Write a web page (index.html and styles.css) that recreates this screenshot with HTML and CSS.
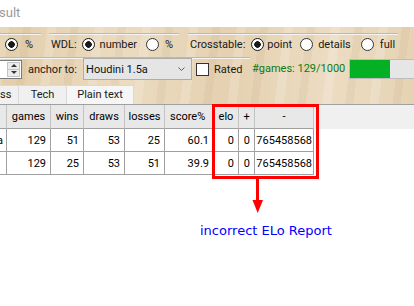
FILE: index.html
```html
<!DOCTYPE html>
<html lang="en">
<head>
    <meta charset="UTF-8">
    <meta name="viewport" content="width=device-width, initial-scale=1.0">
    <title>Tournament Result</title>
    <link rel="stylesheet" href="styles.css">
</head>
<body>

<div class="titlebar"><span class="title">sult</span></div>

<div class="toolbar">
    <div class="row1">
        <div class="grp g1">
            <span class="radio on"></span><span class="lbl ml7">%</span>
        </div>
        <div class="grp g2">
            <span class="lbl">WDL:</span>
            <span class="radio on ml5"></span><span class="lbl ml5">number</span>
            <span class="radio ml9"></span><span class="lbl ml6">%</span>
        </div>
        <div class="grp g3">
            <span class="lbl">Crosstable:</span>
            <span class="radio on ml6"></span><span class="lbl ml3">point</span>
            <span class="radio ml8"></span><span class="lbl ml5">details</span>
            <span class="radio ml10"></span><span class="lbl ml6">full</span>
        </div>
    </div>

    <div class="row2">
        <div class="grp g4">
            <div class="spin">
                <div class="spinbtn">
                    <span class="up"></span>
                    <span class="down"></span>
                </div>
            </div>
            <span class="lbl ml6">anchor to:</span>
            <div class="combo">
                <span>Houdini 1.5a</span>
                <svg width="7" height="4" viewBox="0 0 7 4"><polyline points="0.5,0.5 3.5,3.5 6.5,0.5" fill="none" stroke="#606060" stroke-width="1"/></svg>
            </div>
            <span class="check"></span><span class="lbl ml5">Rated</span>
        </div>
        <span class="games">#games: 129/1000</span>
        <div class="progress"><div class="fill" style="width: 40px"></div></div>
    </div>

    <div class="tabs">
        <div class="tab t1">ss</div>
        <div class="tab t2">Tech</div>
        <div class="tab t3">Plain text</div>
    </div>
</div>

<div class="panel">
    <table class="result">
        <colgroup>
            <col style="width: 7px">
            <col style="width: 44px">
            <col style="width: 33px">
            <col style="width: 41px">
            <col style="width: 40px">
            <col style="width: 49px">
            <col style="width: 25px">
            <col style="width: 16px">
            <col style="width: 59px">
            <col>
        </colgroup>
        <tr>
            <th></th>
            <th>games</th>
            <th>wins</th>
            <th>draws</th>
            <th>losses</th>
            <th class="clip">score%</th>
            <th>elo</th>
            <th>+</th>
            <th>-</th>
            <th class="filler"></th>
        </tr>
        <tr>
            <td class="name"><span>a</span></td>
            <td>129</td>
            <td>51</td>
            <td>53</td>
            <td>25</td>
            <td>60.1</td>
            <td>0</td>
            <td>0</td>
            <td class="wide">765458568</td>
            <td class="filler"></td>
        </tr>
        <tr>
            <td class="name"></td>
            <td>129</td>
            <td>25</td>
            <td>53</td>
            <td>51</td>
            <td>39.9</td>
            <td>0</td>
            <td>0</td>
            <td class="wide">765458568</td>
            <td class="filler"></td>
        </tr>
    </table>
</div>

<!-- annotation drawn over the screenshot -->
<div class="annotation">
    <div class="redbox"></div>
    <svg class="arrow" width="12" height="34" viewBox="0 0 12 34">
        <rect x="4" y="0" width="3" height="22" fill="#ff0000"/>
        <polygon points="0.5,21 11,21 5.7,34" fill="#ff0000"/>
    </svg>
    <div class="note">incorrect ELo Report</div>
</div>

</body>
</html>
```

FILE: styles.css
```css
body {
    margin: 0;
    width: 414px;
    height: 306px;
    overflow: hidden;
    position: relative;
    background: #fff;
    font-family: Roboto, "Liberation Sans", sans-serif;
    font-size: 11px;
    color: #1a1a1a;
}

.titlebar {
    height: 27px;
    overflow: hidden;
    background: #fff;
}

.title {
    display: block;
    padding-top: 5px;
    font-size: 13px;
    color: #9a9a9a;
    margin-left: -1px;
}

.toolbar {
    height: 77px;
    padding-top: 6px;
    box-sizing: border-box;
    background-color: #e6d3b4;
    background-image:
        repeating-linear-gradient(97deg, rgba(255, 255, 255, 0.16) 0 9px, rgba(255, 255, 255, 0) 9px 23px, rgba(120, 80, 30, 0.05) 23px 31px, rgba(255, 255, 255, 0) 31px 47px),
        linear-gradient(90deg, #e3ceab, #ebdbc0 30%, #e5d1b1 55%, #ecdcc2 80%, #e6d3b4);
}

.row1 {
    display: flex;
    height: 24px;
}

.grp {
    flex: none;
    display: flex;
    align-items: center;
    border-top: 1px solid #bdb8b0;
    box-shadow: inset 0 1px #f4f4f4;
    box-sizing: border-box;
}

.row1 .grp {
    align-items: flex-start;
    padding-top: 2px;
    height: 24px;
}

.row1 .grp > * {
    height: 17px;
    line-height: 17px;
}

.row1 .radio {
    margin-top: 2px;
    height: 13px;
}

.g1 { width: 41px; padding-left: 5px; }
.g2 { width: 130px; margin-left: 8px; padding-left: 2px; }
.g3 { width: 210px; margin-left: 9px; padding-left: 2px; }

.radio {
    flex: none;
    width: 13px;
    height: 13px;
    border: 1px solid #333;
    border-radius: 50%;
    background: #fff;
    box-sizing: border-box;
}

.radio.on {
    border-color: #1a1a1a;
    background: radial-gradient(circle, #1a1a1a 0 3px, #fff 3.6px);
}

.lbl { white-space: nowrap; }

.ml3 { margin-left: 3px; }
.ml5 { margin-left: 5px; }
.ml6 { margin-left: 6px; }
.ml7 { margin-left: 7px; }
.ml8 { margin-left: 8px; }
.ml9 { margin-left: 9px; }
.ml10 { margin-left: 10px; }

.row2 {
    display: flex;
    height: 23px;
}

.g4 {
    width: 250px;
    height: 23px;
}

.spin {
    flex: none;
    width: 22px;
    height: 19px;
    display: flex;
    justify-content: flex-end;
    align-items: center;
    background: #fff;
    border: 1px solid #7a7a7a;
    border-left: none;
    box-sizing: border-box;
}

.spinbtn {
    width: 13px;
    height: 15px;
    margin-right: 1px;
    display: flex;
    flex-direction: column;
    background: #ececec;
    border: 1px solid #c4c4c4;
    box-sizing: border-box;
}

.spinbtn span {
    flex: 1;
    display: flex;
    justify-content: center;
    align-items: center;
}

.spinbtn .up {
    border-bottom: 1px solid #c4c4c4;
}

.spinbtn .up::before,
.spinbtn .down::before {
    content: "";
    border-left: 3px solid transparent;
    border-right: 3px solid transparent;
}

.spinbtn .up::before { border-bottom: 3px solid #333; }
.spinbtn .down::before { border-top: 3px solid #333; }

.combo {
    flex: none;
    margin-left: 6px;
    width: 109px;
    height: 22px;
    display: flex;
    align-items: center;
    justify-content: space-between;
    padding: 0 6px 0 2px;
    background: #e5e5e5;
    border: 1px solid #adadad;
    box-sizing: border-box;
    color: #111;
}

.check {
    flex: none;
    margin-left: 4px;
    width: 13px;
    height: 13px;
    background: #fff;
    border: 1px solid #333;
    box-sizing: border-box;
}

.games {
    flex: none;
    align-self: center;
    margin-left: 2px;
    color: #0e7a12;
    white-space: nowrap;
}

.progress {
    flex: 1;
    align-self: center;
    margin-left: 4px;
    height: 20px;
    background: #e6e6e6;
    border: 1px solid #bcbcbc;
    border-right: none;
    box-sizing: border-box;
}

.fill {
    height: 100%;
    background: #06b025;
}

.tabs {
    display: flex;
    height: 19px;
    margin-top: 5px;
}

.tab {
    height: 19px;
    line-height: 18px;
    box-sizing: border-box;
    background: #f0f0f0;
    border-top: 1px solid #d9d9d9;
    border-right: 1px solid #d9d9d9;
    text-align: center;
    white-space: nowrap;
    overflow: hidden;
}

.t1 { width: 19px; text-align: left; }
.t2 { width: 48px; }
.t3 { width: 67px; background: #f6f6f6; }

.panel {
    border-top: 1px solid #a0a0a0;
    background: #fff;
}

.result {
    table-layout: fixed;
    width: 414px;
    border-collapse: separate;
    border-spacing: 0;
    color: #000;
}

.result th,
.result td {
    box-sizing: border-box;
    padding: 0 4px 0 0;
    border-right: 1px solid #a0a0a0;
    border-bottom: 1px solid #a0a0a0;
    white-space: nowrap;
    overflow: hidden;
}

.result th {
    height: 24px;
    font-weight: normal;
    text-align: center;
    background: #e8e8e8;
    border-right-color: #c3c3c3;
    padding: 0;
}

.result td {
    height: 23px;
    text-align: right;
}

.result td.wide {
    padding-right: 1px;
}

.result .name {
    padding: 0;
    text-align: left;
}

.result .name span {
    margin-left: -3px;
}

.result .clip {
    text-align: left;
    padding-left: 5px;
    text-overflow: clip;
}

.result th.filler {
    background: #f0f0f0;
    border: none;
}

.result td.filler {
    border: none;
}

.annotation {
    position: absolute;
    left: 212px;
    top: 104px;
    width: 131px;
}

.redbox {
    width: 107px;
    height: 75px;
    border: 3px solid #ff0000;
    box-sizing: border-box;
}

.arrow {
    display: block;
    margin-left: 40px;
}

.note {
    margin: 10px 0 0 -12px;
    font-family: "DejaVu Sans", Verdana, sans-serif;
    font-size: 13px;
    line-height: 15px;
    color: #0000ff;
    white-space: nowrap;
}
```
